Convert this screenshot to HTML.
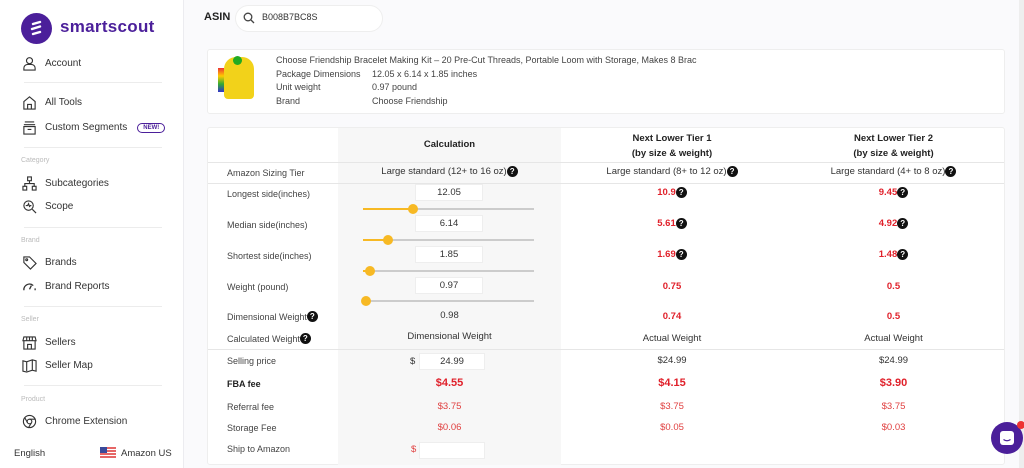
<!DOCTYPE html>
<html><head><meta charset="utf-8"><style>
*{box-sizing:border-box;margin:0;padding:0}
body{width:1024px;height:468px;overflow:hidden;background:#fafafc;font-family:"Liberation Sans",sans-serif;color:#333;position:relative}
.a{position:absolute;white-space:nowrap}
#sb{position:absolute;left:0;top:0;width:184px;height:468px;background:#fff;border-right:1px solid #ececf0}
.ni{position:absolute;left:22px;font-size:10px;color:#333;display:flex;align-items:center}
.ni svg{width:15px;height:15px;margin-right:8px}
.cat{position:absolute;left:21px;font-size:7px;color:#bbb}
.hr{position:absolute;left:24px;width:138px;border-top:1px solid #ececec}
.card{position:absolute;background:#fff;border:1px solid #eee;border-radius:3px}
.t{font-size:9px;color:#444}
.c{position:absolute;text-align:center;white-space:nowrap;font-size:9.5px;line-height:12px}
.red{color:#e0202a;font-weight:bold}
.lred{color:#e04040}
.q{display:inline-block;width:11px;height:11px;border-radius:50%;background:#111;color:#fff;font-size:8px;line-height:11px;text-align:center;font-weight:bold;vertical-align:top;margin-top:0px}
.inp{position:absolute;left:415px;width:68px;height:17px;background:#fff;border:1px solid #eee;font-size:9.5px;text-align:center;line-height:15px}
.tr{position:absolute;left:363px;width:171px;height:2px;background:#ccc}
.tr i{position:absolute;left:0;top:0;height:2px;background:#f7b924}
.tr b{position:absolute;top:-4px;width:10px;height:10px;border-radius:50%;background:#f7b924;margin-left:-5px}
.lb{position:absolute;left:227px;font-size:9px;color:#444;line-height:12px}
</style></head><body>
<div id="sb">
 <div class="a" style="left:21px;top:13px;width:31px;height:31px;border-radius:50%;background:#4b1f9a"></div>
 <svg class="a" style="left:28px;top:20px" width="17" height="17" viewBox="0 0 17 17"><path d="M5 4l7-2M4 9l8-2.5M5 14l7-2" stroke="#fff" stroke-width="2.4" stroke-linecap="round"/></svg>
 <div class="a" style="left:60px;top:17px;font-size:17px;font-weight:bold;color:#4b1f9a;letter-spacing:0.3px">smartscout</div>
 <div class="ni" style="top:56px"><svg viewBox="0 0 16 16" fill="none" stroke="#333" stroke-width="1.2"><circle cx="8" cy="5" r="3.2"/><path d="M2 15v-2a4 4 0 0 1 4-4h4a4 4 0 0 1 4 4v2z"/></svg>Account</div>
 <div class="hr" style="top:82px"></div>
 <div class="ni" style="top:95px"><svg viewBox="0 0 16 16" fill="none" stroke="#333" stroke-width="1.2"><path d="M2 7l6-5 6 5v8H2z M6 15v-5h4v5"/></svg>All Tools</div>
 <div class="ni" style="top:120px"><svg viewBox="0 0 16 16" fill="none" stroke="#333" stroke-width="1.2"><path d="M3 2h10M2 5h12M2 7h12v8H2z M6 10h4"/></svg>Custom Segments<span style="margin-left:10px;border:1.5px solid #4b1f9a;color:#4b1f9a;border-radius:8px;font-size:6px;font-weight:bold;padding:1px 5px">NEW!</span></div>
 <div class="hr" style="top:147px"></div>
 <div class="cat" style="top:157px">Category</div>
 <div class="ni" style="top:176px"><svg viewBox="0 0 16 16" fill="none" stroke="#333" stroke-width="1.2"><rect x="6" y="1" width="4" height="4"/><rect x="1" y="11" width="4" height="4"/><rect x="11" y="11" width="4" height="4"/><path d="M8 5v3M3 11V8h10v3"/></svg>Subcategories</div>
 <div class="ni" style="top:199px"><svg viewBox="0 0 16 16" fill="none" stroke="#333" stroke-width="1.2"><circle cx="7" cy="7" r="5"/><path d="M11 11l4 4M4 7h2l1-2 1 3 1-1h1"/></svg>Scope</div>
 <div class="hr" style="top:227px"></div>
 <div class="cat" style="top:237px">Brand</div>
 <div class="ni" style="top:255px"><svg viewBox="0 0 16 16" fill="none" stroke="#333" stroke-width="1.2"><path d="M2 2h6l7 7-6 6-7-7z"/><circle cx="5" cy="5" r="1"/></svg>Brands</div>
 <div class="ni" style="top:279px"><svg viewBox="0 0 16 16" fill="none" stroke="#333" stroke-width="1.4"><path d="M2 12a6 6 0 0 1 10-5M8 11l2-4M14 10v2"/></svg>Brand Reports</div>
 <div class="hr" style="top:306px"></div>
 <div class="cat" style="top:316px">Seller</div>
 <div class="ni" style="top:335px"><svg viewBox="0 0 16 16" fill="none" stroke="#333" stroke-width="1.2"><path d="M2 2h12l1 4H1z M2 6v9h12V6 M6 15v-5h4v5 M5 2v4M8 2v4M11 2v4"/></svg>Sellers</div>
 <div class="ni" style="top:358px"><svg viewBox="0 0 16 16" fill="none" stroke="#333" stroke-width="1.2"><path d="M1 3l4 1 6-2 4 1v11l-4-1-6 2-4-1z M5 4v10M11 2v11"/></svg>Seller Map</div>
 <div class="hr" style="top:385px"></div>
 <div class="cat" style="top:396px">Product</div>
 <div class="ni" style="top:414px"><svg viewBox="0 0 16 16" fill="none" stroke="#333" stroke-width="1.2"><circle cx="8" cy="8" r="6.5"/><circle cx="8" cy="8" r="2.5"/><path d="M8 5.5h6M5.8 9.2L3 4M10.2 9.2L7 14.4"/></svg>Chrome Extension</div>
 <div class="a" style="left:14px;top:448px;font-size:9.5px;color:#333">English</div>
 <svg class="a" style="left:100px;top:447px" width="16" height="12" viewBox="0 0 16 12"><rect width="16" height="12" fill="#fff"/><path d="M0 1h16M0 4h16M0 7h16M0 10h16" stroke="#d33" stroke-width="1.4"/><rect width="7" height="6" fill="#3a4a9a"/></svg>
 <div class="a" style="left:121px;top:448px;font-size:9.5px;color:#333">Amazon US</div>
</div>
<div class="a" style="left:204px;top:11px;font-size:11px;font-weight:bold;color:#222">ASIN</div>
<div class="a" style="left:235px;top:5px;width:148px;height:27px;border:1px solid #eee;border-radius:14px;background:#fff"></div>
<svg class="a" style="left:243px;top:12px" width="12" height="12" viewBox="0 0 12 12" fill="none" stroke="#444" stroke-width="1.3"><circle cx="5" cy="5" r="3.8"/><path d="M8 8l3 3"/></svg>
<div class="a" style="left:262px;top:12px;font-size:9px;color:#333">B008B7BC8S</div>

<div class="card" style="left:207px;top:49px;width:798px;height:65px"></div>
<div class="a" style="left:218px;top:68px;width:6px;height:24px;background:linear-gradient(#e33,#fc0,#3a3,#33c)"></div>
<div class="a" style="left:224px;top:57px;width:30px;height:42px;background:#f2d21a;border-radius:12px 12px 4px 4px"></div>
<div class="a" style="left:233px;top:56px;width:9px;height:9px;background:#2a2;border-radius:50%"></div>
<div class="a t" style="left:276px;top:55px">Choose Friendship Bracelet Making Kit – 20 Pre-Cut Threads, Portable Loom with Storage, Makes 8 Brac</div>
<div class="a t" style="left:276px;top:69px">Package Dimensions</div><div class="a t" style="left:372px;top:69px">12.05 x 6.14 x 1.85 inches</div>
<div class="a t" style="left:276px;top:82px">Unit weight</div><div class="a t" style="left:372px;top:82px">0.97 pound</div>
<div class="a t" style="left:276px;top:96px">Brand</div><div class="a t" style="left:372px;top:96px">Choose Friendship</div>

<div class="card" style="left:207px;top:127px;width:798px;height:338px"></div>
<div class="a" style="left:338px;top:128px;width:223px;height:337px;background:#f7f7f7"></div>
<div class="a" style="left:208px;top:162px;width:796px;border-top:1px solid #e6e6e6"></div>
<div class="a" style="left:208px;top:183px;width:796px;border-top:1px solid #e6e6e6"></div>
<div class="a" style="left:208px;top:349px;width:796px;border-top:1px solid #e6e6e6"></div>

<div class="c" style="left:338px;width:223px;top:139px;font-weight:bold;font-size:9.5px;color:#222">Calculation</div>
<div class="c" style="left:561px;width:222px;top:131px;font-weight:bold;font-size:9.5px;color:#222;line-height:15px">Next Lower Tier 1<br>(by size &amp; weight)</div>
<div class="c" style="left:783px;width:221px;top:131px;font-weight:bold;font-size:9.5px;color:#222;line-height:15px">Next Lower Tier 2<br>(by size &amp; weight)</div>

<div class="lb" style="top:167px">Amazon Sizing Tier</div>
<div class="c" style="left:338px;width:223px;top:166px">Large standard (12+ to 16 oz)<span class="q">?</span></div>
<div class="c" style="left:561px;width:222px;top:166px">Large standard (8+ to 12 oz)<span class="q">?</span></div>
<div class="c" style="left:783px;width:221px;top:166px">Large standard (4+ to 8 oz)<span class="q">?</span></div>

<div class="lb" style="top:188px">Longest side(inches)</div>
<div class="inp" style="top:184px">12.05</div>
<div class="tr" style="top:208px"><i style="width:50px"></i><b style="left:50px"></b></div>
<div class="lb" style="top:219px">Median side(inches)</div>
<div class="inp" style="top:215px">6.14</div>
<div class="tr" style="top:239px"><i style="width:25px"></i><b style="left:25px"></b></div>
<div class="lb" style="top:250px">Shortest side(inches)</div>
<div class="inp" style="top:246px">1.85</div>
<div class="tr" style="top:270px"><i style="width:7px"></i><b style="left:7px"></b></div>
<div class="lb" style="top:281px">Weight (pound)</div>
<div class="inp" style="top:277px">0.97</div>
<div class="tr" style="top:300px"><i style="width:3px"></i><b style="left:3px"></b></div>
<div class="lb" style="top:311px">Dimensional Weight<span class="q">?</span></div>
<div class="c" style="left:338px;width:223px;top:310px">0.98</div>
<div class="lb" style="top:333px">Calculated Weight<span class="q">?</span></div>
<div class="c" style="left:338px;width:223px;top:331px">Dimensional Weight</div>

<div class="c red" style="left:561px;width:222px;top:187px">10.9<span class="q">?</span></div>
<div class="c red" style="left:561px;width:222px;top:218px">5.61<span class="q">?</span></div>
<div class="c red" style="left:561px;width:222px;top:249px">1.69<span class="q">?</span></div>
<div class="c red" style="left:561px;width:222px;top:281px">0.75</div>
<div class="c red" style="left:561px;width:222px;top:311px">0.74</div>
<div class="c" style="left:561px;width:222px;top:333px">Actual Weight</div>
<div class="c red" style="left:783px;width:221px;top:187px">9.45<span class="q">?</span></div>
<div class="c red" style="left:783px;width:221px;top:218px">4.92<span class="q">?</span></div>
<div class="c red" style="left:783px;width:221px;top:249px">1.48<span class="q">?</span></div>
<div class="c red" style="left:783px;width:221px;top:281px">0.5</div>
<div class="c red" style="left:783px;width:221px;top:311px">0.5</div>
<div class="c" style="left:783px;width:221px;top:333px">Actual Weight</div>

<div class="lb" style="top:355px">Selling price</div>
<div class="a" style="left:410px;top:356px;font-size:9.5px">$</div>
<div class="inp" style="top:353px;left:419px;width:66px">24.99</div>
<div class="c" style="left:561px;width:222px;top:355px">$24.99</div>
<div class="c" style="left:783px;width:221px;top:355px">$24.99</div>
<div class="lb" style="top:378px;font-weight:bold;color:#222">FBA fee</div>
<div class="c red" style="left:338px;width:223px;top:377px;font-size:11px">$4.55</div>
<div class="c red" style="left:561px;width:222px;top:377px;font-size:11px">$4.15</div>
<div class="c red" style="left:783px;width:221px;top:377px;font-size:11px">$3.90</div>
<div class="lb" style="top:401px">Referral fee</div>
<div class="c lred" style="left:338px;width:223px;top:401px">$3.75</div>
<div class="c lred" style="left:561px;width:222px;top:401px">$3.75</div>
<div class="c lred" style="left:783px;width:221px;top:401px">$3.75</div>
<div class="lb" style="top:422px">Storage Fee</div>
<div class="c lred" style="left:338px;width:223px;top:422px">$0.06</div>
<div class="c lred" style="left:561px;width:222px;top:422px">$0.05</div>
<div class="c lred" style="left:783px;width:221px;top:422px">$0.03</div>
<div class="lb" style="top:443px">Ship to Amazon</div>
<div class="a lred" style="left:411px;top:444px;font-size:9.5px">$</div>
<div class="inp" style="top:442px;left:419px;width:66px"></div>

<div class="a" style="left:1019px;top:0;width:5px;height:468px;background:#eee"></div>
<div class="a" style="left:991px;top:422px;width:32px;height:32px;border-radius:50%;background:#4b1f9a"></div>
<svg class="a" style="left:999px;top:430px" width="16" height="16" viewBox="0 0 16 16"><rect x="1" y="1" width="14" height="14" rx="3" fill="#fff"/><path d="M4.5 9.5q3.5 2.5 7 0" stroke="#4b1f9a" stroke-width="1.3" fill="none"/></svg>
<div class="a" style="left:1017px;top:421px;width:8px;height:8px;border-radius:50%;background:#e33"></div>
</body></html>
